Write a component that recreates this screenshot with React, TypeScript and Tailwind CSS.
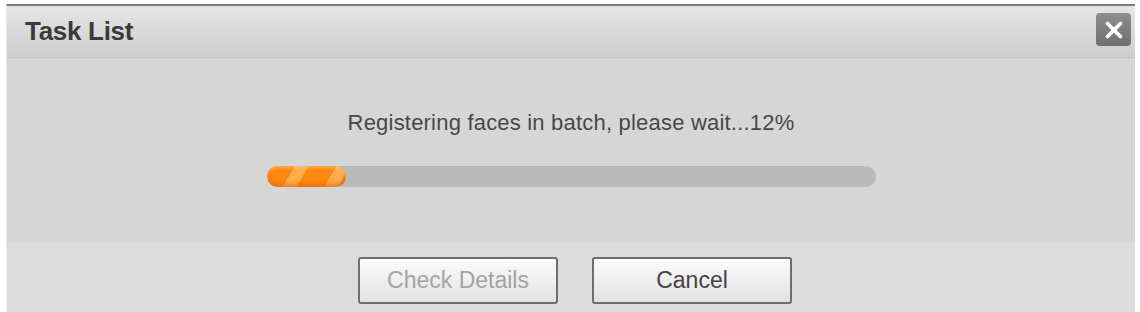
import { X } from 'lucide-react'

const font = { fontFamily: '"Liberation Sans", Arial, sans-serif' }

export default function App() {
  const percent = 12

  return (
    <div className="w-[1140px] h-[312px] bg-white pl-[6px] pr-[5px] pt-[4px]" style={font}>
      <div className="h-full flex flex-col border-t-2 border-[#7a7a7a] border-l border-l-[#e8e8e8]">
        {/* header */}
        <div className="h-[52px] shrink-0 flex items-center justify-between pl-[18px] pr-[4px] bg-gradient-to-b from-[#e6e6e6] to-[#cdcdcd] border-b border-[#c4c4c4]">
          <span className="text-[26px] font-bold text-[#3a3a3a] tracking-[-0.3px]">Task List</span>
          <button className="w-[35px] h-[33px] mb-[4px] rounded-[4px] bg-gradient-to-b from-[#8e8e8e] to-[#6f6f6f] flex items-center justify-center">
            <X className="w-[26px] h-[26px] text-white" strokeWidth={3.5} />
          </button>
        </div>

        {/* body */}
        <div className="h-[184px] shrink-0 bg-[#d6d6d6] flex flex-col items-center pt-[52px]">
          <div className="text-[22px] leading-[26px] text-[#484848] tracking-[0.2px]">
            Registering faces in batch, please wait...{percent}%
          </div>
          <div className="mt-[30px] w-[609px] h-[21px] rounded-full bg-[#bababa] overflow-hidden">
            <div
              className="h-full rounded-full bg-[repeating-linear-gradient(120deg,#ff8810_0px,#ff8810_24px,#ffad4a_24px,#ffad4a_36px)] shadow-[inset_0_-3px_4px_rgba(220,90,0,0.55),inset_0_2px_3px_rgba(255,220,150,0.45)]"
              style={{ width: `${percent + 1}%` }}
            />
          </div>
        </div>

        {/* footer */}
        <div className="flex-1 bg-[#dcdcdc] flex justify-center gap-[34px] pt-[15px] pl-[8px]">
          <button className="w-[200px] h-[47px] rounded-[3px] border-2 border-[#6e6e6e] bg-gradient-to-b from-[#fbfbfb] to-[#e2e2e2] text-[23px] text-[#a3a3a3]">
            Check Details
          </button>
          <button className="w-[200px] h-[47px] rounded-[3px] border-2 border-[#6e6e6e] bg-gradient-to-b from-[#fbfbfb] to-[#e2e2e2] text-[23px] text-[#444]">
            Cancel
          </button>
        </div>
      </div>
    </div>
  )
}
